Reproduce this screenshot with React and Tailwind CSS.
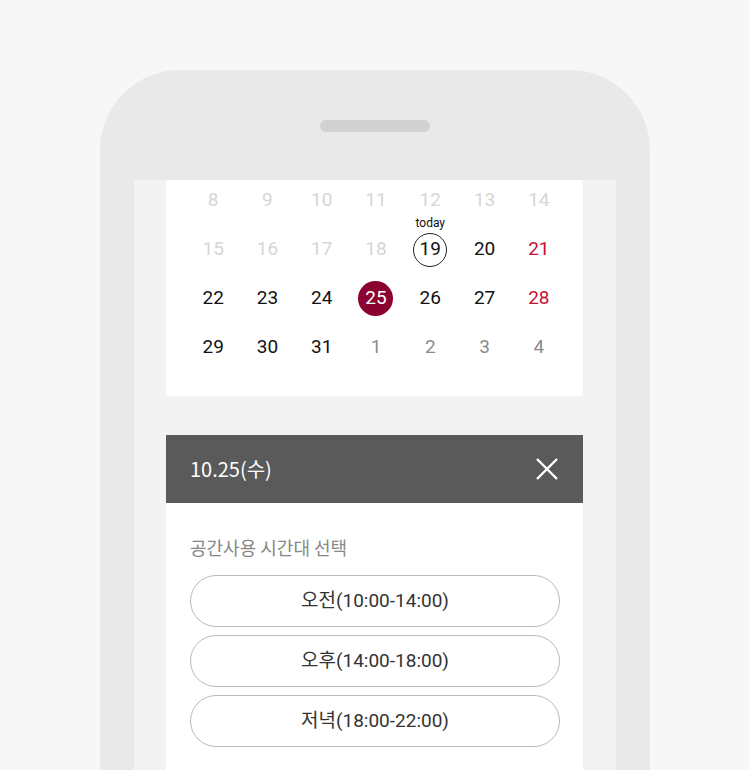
import React from 'react';

const ROWS = [
  [
    { d: 8, t: 'past' }, { d: 9, t: 'past' }, { d: 10, t: 'past' }, { d: 11, t: 'past' },
    { d: 12, t: 'past' }, { d: 13, t: 'past' }, { d: 14, t: 'past' },
  ],
  [
    { d: 15, t: 'past' }, { d: 16, t: 'past' }, { d: 17, t: 'past' }, { d: 18, t: 'past' },
    { d: 19, t: 'today' }, { d: 20, t: 'day' }, { d: 21, t: 'sun' },
  ],
  [
    { d: 22, t: 'day' }, { d: 23, t: 'day' }, { d: 24, t: 'day' }, { d: 25, t: 'selected' },
    { d: 26, t: 'day' }, { d: 27, t: 'day' }, { d: 28, t: 'sun' },
  ],
  [
    { d: 29, t: 'day' }, { d: 30, t: 'day' }, { d: 31, t: 'day' }, { d: 1, t: 'next' },
    { d: 2, t: 'next' }, { d: 3, t: 'next' }, { d: 4, t: 'next' },
  ],
];

const SLOTS = ['오전(10:00-14:00)', '오후(14:00-18:00)', '저녁(18:00-22:00)'];

const COLORS = {
  past: 'text-[#d6d6d6]',
  day: 'text-[#111111]',
  sun: 'text-[#c8102e]',
  next: 'text-[#8c8c8c]',
};

function DayCell({ day }) {
  if (day.t === 'today') {
    return (
      <div className="flex items-center justify-center h-[49px]">
        <div className="relative flex items-center justify-center w-[34px] h-[34px] rounded-full border border-[#222222] text-[#111111]">
          <span className="absolute left-1/2 -translate-x-1/2 top-[-18px] text-[12px] leading-[14px] text-[#111111]">
            today
          </span>
          {day.d}
        </div>
      </div>
    );
  }
  if (day.t === 'selected') {
    return (
      <div className="flex items-center justify-center h-[49px]">
        <div className="flex items-center justify-center w-[35px] h-[35px] rounded-full bg-[#8a0230] text-white">
          {day.d}
        </div>
      </div>
    );
  }
  return (
    <div className={`flex items-center justify-center h-[49px] ${COLORS[day.t]}`}>
      {day.d}
    </div>
  );
}

export default function App() {
  return (
    <div className="h-[770px] overflow-hidden bg-[#f7f7f7] pt-[70px]">
      {/* Phone frame */}
      <div className="mx-auto w-[550px] h-[700px] rounded-t-[80px] bg-[#e9e9e9] px-[34px] flex flex-col">
        <div className="flex justify-center pt-[50px] h-[110px]">
          <div className="w-[110px] h-[12px] rounded-[6px] bg-[#d1d1d1]" />
        </div>

        {/* Screen */}
        <div className="flex-1 overflow-hidden bg-[#f4f3f4] pl-[32px]">
          {/* Calendar */}
          <div className="w-[417px] -mt-[4px] bg-white pl-[20px] pr-[17px] pb-[24px] font-['Roboto',sans-serif] text-[19px]">
            {ROWS.map((row, i) => (
              <div key={i} className="grid grid-cols-7">
                {row.map((day) => (
                  <DayCell key={`${i}-${day.d}`} day={day} />
                ))}
              </div>
            ))}
          </div>

          {/* Time slot panel */}
          <div className="w-[417px] mt-[39px]">
            <div className="flex items-center justify-between h-[68px] bg-[#5a5a5a] pl-[24px] pr-[25px]">
              <span className="text-white text-[20px] font-['Noto_Sans_CJK_KR',sans-serif]">10.25(수)</span>
              <svg width="22" height="22" viewBox="0 0 22 22" fill="none" stroke="white" strokeWidth="2.4">
                <path d="M1 1L21 21M21 1L1 21" />
              </svg>
            </div>
            <div className="bg-white px-[24px] pt-[31px] pb-[30px]">
              <p className="text-[18px] leading-[26px] text-[#888888] font-['Noto_Sans_CJK_KR',sans-serif] mb-[15px]">
                공간사용 시간대 선택
              </p>
              <div className="flex flex-col gap-[8px] w-[370px]">
                {SLOTS.map((slot) => (
                  <button
                    key={slot}
                    className="h-[52px] rounded-full border border-[#bbbbbb] bg-white text-[19px] text-[#333333] font-['Roboto','Noto_Sans_CJK_KR',sans-serif]"
                  >
                    {slot}
                  </button>
                ))}
              </div>
            </div>
          </div>
        </div>
      </div>
    </div>
  );
}
